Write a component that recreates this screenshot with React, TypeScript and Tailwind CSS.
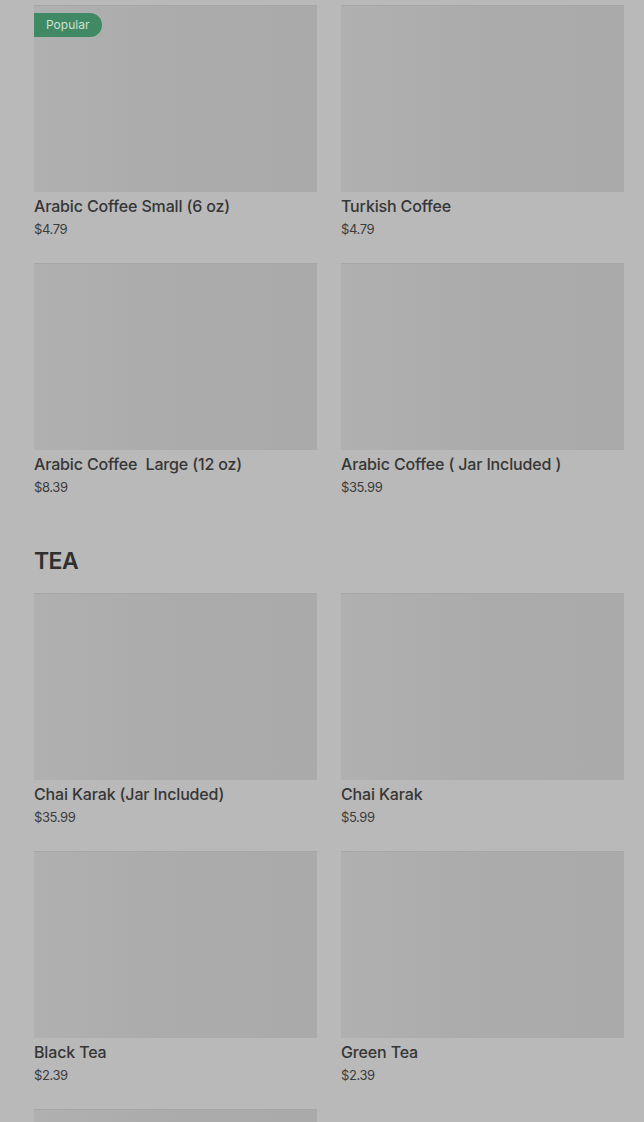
import React from "react";

type Item = { name: string; price: string; popular?: boolean };

const coffee: Item[] = [
  { name: "Arabic Coffee Small (6 oz)", price: "$4.79", popular: true },
  { name: "Turkish Coffee", price: "$4.79" },
  { name: "Arabic Coffee\u00a0 Large (12 oz)", price: "$8.39" },
  { name: "Arabic Coffee ( Jar Included )", price: "$35.99" },
];

const tea: Item[] = [
  { name: "Chai Karak (Jar Included)", price: "$35.99" },
  { name: "Chai Karak", price: "$5.99" },
  { name: "Black Tea", price: "$2.39" },
  { name: "Green Tea", price: "$2.39" },
  { name: "", price: "" },
];

function Card({ item }: { item: Item }) {
  return (
    <div className="flex flex-col">
      <div className="relative h-[187px] w-full bg-gradient-to-r from-[#b0b0b0] via-[#ababab] to-[#aaaaaa] border-t border-[#a6a6a6]">
        {item.popular && (
          <div className="absolute left-0 top-[7px] h-[24px] pl-[12px] pr-[13px] flex items-center rounded-r-full bg-[#3f8a64] text-[#cfe0d6] text-[12px]">
            Popular
          </div>
        )}
      </div>
      {item.name && (
        <>
          <div className="mt-[3px] text-[16px] leading-[22px] font-medium tracking-[-0.15px] text-[#363636]">{item.name}</div>
          <div className="mt-[2px] text-[13px] leading-[20px] tracking-[-0.4px] text-[#3c3c3c]">{item.price}</div>
        </>
      )}
    </div>
  );
}

export default function App() {
  return (
    <div
      className="min-h-[1122px] w-[644px] bg-[#b9b9b9] pl-[34px] pr-[20px] pt-[5px] overflow-hidden"
      style={{ fontFamily: "Inter, 'Noto Sans', sans-serif" }}
    >
      <div className="grid grid-cols-2 gap-x-[24px] gap-y-[24px]">
        {coffee.map((it, i) => (
          <Card key={i} item={it} />
        ))}
      </div>
      <h2 className="mt-[49px] mb-[17px] text-[23px] leading-[30px] font-semibold text-[#2f2f2f] tracking-[-0.6px]">TEA</h2>
      <div className="grid grid-cols-2 gap-x-[24px] gap-y-[24px]">
        {tea.map((it, i) => (
          <Card key={i} item={it} />
        ))}
      </div>
    </div>
  );
}
